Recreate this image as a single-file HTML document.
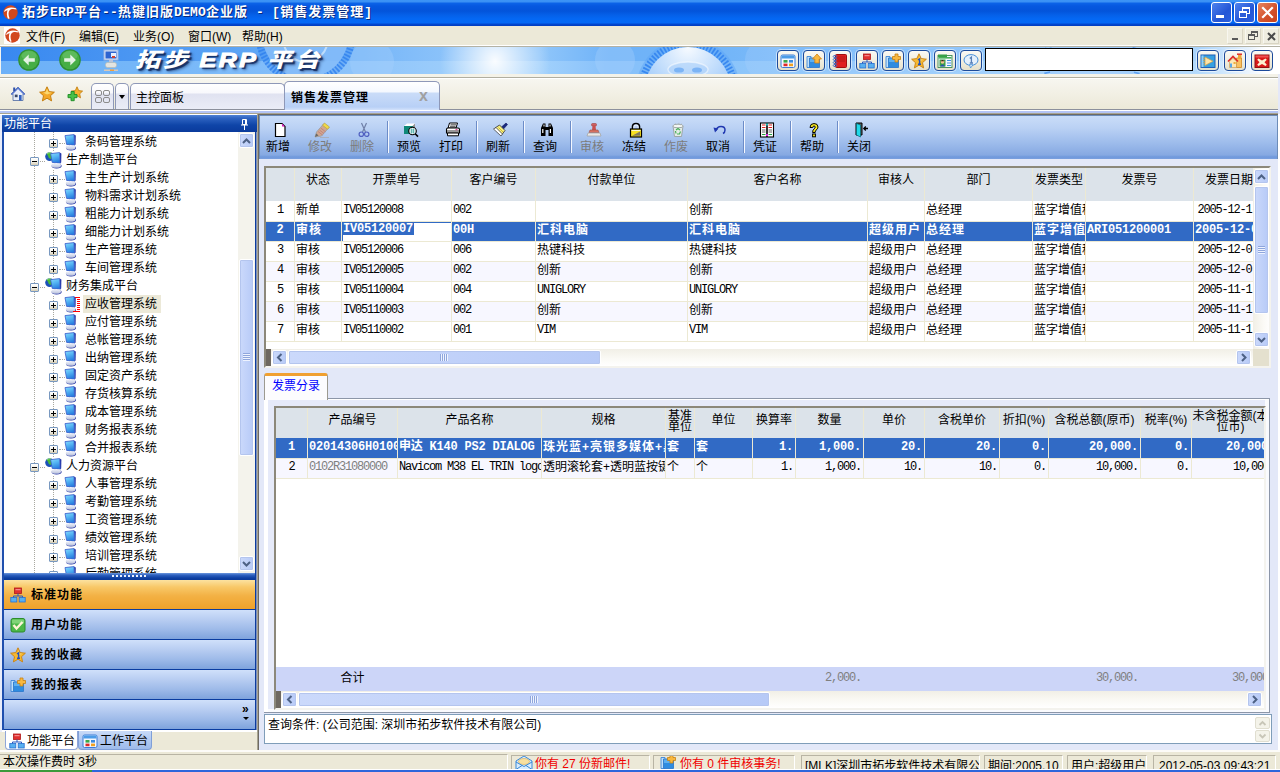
<!DOCTYPE html>
<html lang="zh-CN"><head><meta charset="utf-8"><title>拓步ERP平台</title>
<style>
*{box-sizing:border-box;margin:0;padding:0}
html,body{width:1280px;height:772px;overflow:hidden;background:#ECE9D8;font-family:"Liberation Sans","Noto Sans CJK SC",sans-serif;font-size:12px;color:#000}
.a{position:absolute}
.m{font-family:"Liberation Mono","Noto Sans CJK SC",monospace;font-size:12px;letter-spacing:-1.2px}
#title{left:0;top:0;width:1280px;height:26px;background:linear-gradient(#3C94F6 0,#3A90F4 2px,#0C64E8 3px,#0658E0 6px,#0354DA 11px,#0560E8 15px,#0468F4 19px,#0469F5 23px,#0248D0 24px,#003CC0 26px)}
#title .t{left:22px;top:3px;color:#fff;font-weight:bold;font-size:13px;line-height:18px;white-space:nowrap;letter-spacing:1px;font-family:"Liberation Sans","Noto Sans CJK SC",sans-serif;text-shadow:1px 1px 0 #0A2A7A}
.tb{top:2px;width:21px;height:21px;border:1px solid #fff;border-radius:3px;background:linear-gradient(135deg,#4E82EE,#2456D6 60%,#2A5FDD)}
.tb.x{background:linear-gradient(135deg,#E8845E,#D2502A 60%,#C9421C)}
#title .t span{font-family:"Liberation Mono",monospace;letter-spacing:.2px;white-space:pre}
#menu{left:0;top:26px;width:1280px;height:21px;background:linear-gradient(#ECE9D8 0,#ECE9D8 19px,#fff 19px,#fff 20px,#B4B2A4 20px)}
#menu span{position:absolute;top:3px;line-height:16px;white-space:nowrap}
.mb{top:28px;width:16px;height:16px;border:1px solid #F8F7F0;border-right-color:#D8D4C4;border-bottom-color:#D8D4C4;background:#EFEDE0}
#tabs{left:0;top:74px;width:1278px;height:41px;background:linear-gradient(#F4F2E8 0,#F4F2E8 3px,#B0AEA0 3px,#B0AEA0 4px,#fff 4px,#fff 5px,#F7F6F0 5px,#ECE9D8 35px,#8C909C 35px,#8C909C 36px,#fff 36px,#fff 37px,#B4C4F4 37px,#B4C4F4 39px,#A8A490 39px,#A8A490 40px,#fff 40px)}
#redge{left:1278px;top:74px;width:2px;height:678px;background:linear-gradient(#E4E8F8 0,#E4E8F8 40px,#fff 40px)}

.tbtn{position:absolute;top:3px;width:22px;height:21px;border:1px solid #1C4A9A;border-radius:4px;background:linear-gradient(#FAF9F4,#ECE9D8 70%,#E4E0CC);box-shadow:0 0 0 1px rgba(255,255,255,.55)}
.tbtn svg{position:absolute;left:2px;top:2px}
.tab{position:absolute;border:1px solid #8E98B8;border-bottom:0;border-radius:5px 5px 0 0;white-space:nowrap}

#banner{left:0;top:47px;width:1280px;height:27px;overflow:hidden;background:
 radial-gradient(ellipse 55px 60px at 495px 14px,rgba(255,255,255,.95),rgba(255,255,255,0) 100%),
 radial-gradient(circle 44px at 1090px 36px,rgba(255,255,255,.3) 0,rgba(255,255,255,.15) 70%,rgba(255,255,255,0) 100%),
 linear-gradient(90deg,#3888F0 0,#4A96F2 130px,#66ACF6 300px,#8CC3FA 450px,#90C6FA 540px,#6EB2F8 610px,#72B5F8 720px,#86C0FA 850px,#9CCCFB 1100px,#AAD4FC 1200px,#E8F3FE 1250px,#fff 1266px) 0 0/1280px 14px no-repeat,
 linear-gradient(90deg,#6CB0F8 0,#74B6F8 130px,#84BEFA 300px,#9CCDFB 450px,#A2D1FC 540px,#86C0FA 610px,#8AC4FA 720px,#98CAFB 850px,#A8D4FC 1100px,#B4DAFC 1200px,#ECF5FE 1250px,#fff 1266px) 0 14px/1280px 13px no-repeat}
#logo{left:135px;top:-2px;font-size:25px;line-height:30px;font-weight:900;font-style:italic;color:#fff;white-space:nowrap;letter-spacing:2.5px;text-shadow:2px 2px 1px rgba(10,30,80,.8),3px 3px 3px rgba(10,30,80,.45);transform:scaleY(.82);transform-origin:0 50%}
#srch{left:985px;top:1px;width:208px;height:23px;background:#fff;border:1px solid #000}

#tabs svg.i{position:absolute;top:12px}

#lp{left:0;top:115px;width:257px;height:636px;background:linear-gradient(#fff 0,#fff 617px,#ECE9D8 617px)}
#lp .edgeL{left:0;top:0;width:2px;height:617px;background:#E8ECFA}
#lp .bl{left:2px;top:0;width:2px;height:615px;background:#1F4FAE}
#lp .br{left:255px;top:0;width:2px;height:615px;background:linear-gradient(90deg,#0C3C9E 0,#0C3C9E 1px,#7E90BC 1px)}
#lph{left:2px;top:0;width:255px;height:17px;background:linear-gradient(#4F82D6 0,#2F64C2 3px,#0F45A8 10px,#0A3A9C 17px);color:#fff;line-height:19px;padding-left:2px;overflow:hidden}
#tree{left:4px;top:17px;width:234px;height:441px;background:#fff;overflow:hidden}
.tr{position:absolute;left:0;width:234px;height:18px;line-height:18px;white-space:nowrap}
.tr .x{position:absolute;top:6px;width:9px;height:9px;border:1px solid #7898C0;border-radius:1px;background:linear-gradient(#fff 0,#F4F2EA 50%,#D4CCB4)}
.tr .x:before{content:"";position:absolute;left:1px;top:3px;width:5px;height:1px;background:#000}
.tr .x.p:after{content:"";position:absolute;left:3px;top:1px;width:1px;height:5px;background:#000}
.tr .h{position:absolute;top:10px;height:1px;border-top:1px dotted #A8A8A0}
.tr .tx{position:absolute;top:0}
.vl{position:absolute;width:1px;border-left:1px dotted #A8A8A0}
#tsb{left:238px;top:17px;width:17px;height:441px;background:#F4F3EC}
.sbb{position:absolute;width:15px;height:15px;border:1px solid #fff;border-radius:2px;background:linear-gradient(90deg,#CBD9FB,#B7CAF7);box-shadow:0 0 0 1px #B4C5EE inset}
.sbt{position:absolute;border:1px solid #fff;border-radius:2px;background:linear-gradient(90deg,#CBD9FB,#B7CAF7);box-shadow:0 0 0 1px #B4C5EE inset}
#lsp{left:4px;top:458px;width:251px;height:7px;background:linear-gradient(#6D98DE 0,#2F62C0 2px,#0D3FA2 5px,#0A3898 7px)}
.ob{position:absolute;left:4px;width:251px;height:29px;background:linear-gradient(#D0E0FA 0,#BCD0F3 8px,#9CB9E8 20px,#7FA3DC 29px);border-bottom:0}
.ob.on{background:linear-gradient(#FCE2A0 0,#F8C868 7px,#F3B144 16px,#EEA12A 29px)}
.obl{position:absolute;left:4px;width:251px;height:1px;background:#0A3CA0}
.ob b{position:absolute;left:27px;top:7px;line-height:16px;letter-spacing:1px;font-size:12px}
.btab{position:absolute;top:616px;height:19px;line-height:20px;white-space:nowrap}

#spl{left:257px;top:114px;width:2px;height:637px;background:linear-gradient(90deg,#A8A490 0,#A8A490 1px,#6E6A64 1px)}
#rpt{left:258px;top:114px;width:1020px;height:1px;background:#6E6A64}
#rp{left:259px;top:115px;width:1019px;height:636px;background:#E3E8F8}
#rp>*{margin-top:1px}
#tbar{left:0;top:-1px;width:1019px;height:44px;border:1px solid #6C8CB8;border-bottom:0;background:linear-gradient(#CADDF8 0,#BAD1F4 12px,#9FBDEC 26px,#86A9E2 39px,#6F98DC 41px,#7AA0DE 43px);border-bottom:0}
.tbn{position:absolute;top:24px;width:42px;text-align:center;line-height:14px;white-space:nowrap}
.tbn.d{color:#7C7C7C}
.tsep{position:absolute;top:5px;width:2px;height:32px;border-left:1px solid #6C8CC8;border-right:1px solid #F4F8FF}
.ico{position:absolute;top:6px}
.g{position:absolute;background:#fff;border:2px solid #8C887A;border-right-color:#F4F3EE;border-bottom-color:#F4F3EE;overflow:hidden}
.gh{position:absolute;left:0;top:0;background:#DCE3EA}
.c{position:absolute;white-space:nowrap;overflow:hidden;line-height:19px;height:19px}
.vln{position:absolute;width:1px;background:#ECE9D3}
.hln{position:absolute;height:1px;background:#ECE9D3}
.sel{position:absolute;background:#316AC5}
.w{color:#fff;font-weight:bold;letter-spacing:1px}
.m.w{letter-spacing:-0.2px}
.hsb{position:absolute;height:17px;background:linear-gradient(#F1EFE6,#FBFAF6 60%,#fff)}
.vsb{position:absolute;width:18px;background:linear-gradient(90deg,#F1EFE6,#FBFAF6 60%,#fff)}

#pg{left:5px;top:282px;width:1006px;height:315px;background:#E6EAF9;border:1px solid #8C96A8;border-left:0;box-shadow:inset 4px 0 0 #fff,inset 0 1px 0 #fff,inset -4px 0 0 #FAFBFE,inset 0 -3px 0 #FAFBFE}
#tb1{left:5px;top:257px;width:64px;height:27px;background:#FCFCFE;border:1px solid #9C9A90;border-bottom:0;border-top:3px solid #F0A030;border-radius:3px 3px 0 0;color:#0000FF;line-height:20px;padding-left:7px}

#qb{left:5px;top:598px;width:1008px;height:30px;background:#fff;border:1px solid #7F9DB9;line-height:14px;padding:3px 0 0 3px;white-space:nowrap}
.qs{position:absolute;left:990px;width:15px;height:12px;border:1px solid #E0DED0;border-radius:2px;background:#F4F3EA}

#sb{left:0;top:750px;width:1280px;height:22px;background:#ECE9D8;border-top:2px solid #FCFBF8}
.sp{position:absolute;top:3px;height:15px;border:1px solid #B8B4A4;border-right-color:#fff;border-bottom-color:#fff;line-height:17px;white-space:nowrap;overflow:hidden}
.sp.r{color:#F00000}
#task{left:0;top:769px;width:1280px;height:3px;background:#2E66DC;border-top:1px solid #fff}
</style></head>
<body>
<svg width="0" height="0" style="position:absolute"><defs><linearGradient id="scr" x1="0" y1="0" x2="0.3" y2="1"><stop offset="0" stop-color="#8ADCFC"/><stop offset=".45" stop-color="#58B8F4"/><stop offset="1" stop-color="#2A80E0"/></linearGradient><linearGradient id="bs" x1="0" y1="0" x2="0" y2="1"><stop offset="0" stop-color="#F4F6FC"/><stop offset="1" stop-color="#B8C0DC"/></linearGradient></defs></svg>
<div id="title" class="a"><svg class="a" style="left:3px;top:5px" width="15" height="15" viewBox="0 0 15 15"><circle cx="7.5" cy="7.5" r="7.2" fill="#D2481E"/><path d="M1.2 6 C3 2.5 8 1.5 13 3.2 L13.6 4.6 C10.5 3.6 8 3.8 6.6 5.2 C5.2 7 5.2 10 6.6 13.6 L5 13.8 C3.6 10.5 3.6 7.5 4.6 5.2 C3.5 5.4 2.2 6 1.4 7 Z" fill="#fff"/></svg><div class="a t">拓步<span>ERP</span>平台<span>--</span>热键旧版<span>DEMO</span>企业版<span> - [</span>销售发票管理<span>]</span></div><div class="a tb" style="left:1211px"><i class="a" style="left:4px;top:12px;width:8px;height:3px;background:#fff"></i></div><div class="a tb" style="left:1234px"><i class="a" style="left:7px;top:4px;width:8px;height:7px;border:1px solid #fff;border-top-width:2px"></i><i class="a" style="left:4px;top:8px;width:8px;height:7px;border:1px solid #fff;border-top-width:2px;background:#2C5CD8"></i></div><div class="a tb x" style="left:1257px"><svg class="a" style="left:3px;top:3px" width="13" height="13" viewBox="0 0 13 13"><path d="M2 2 L11 11 M11 2 L2 11" stroke="#fff" stroke-width="2.2" stroke-linecap="square"/></svg></div></div>
<div id="menu" class="a"><i class="a" style="left:4px;top:1px;width:16px;height:17px;background:#fff"></i><svg class="a" style="left:5px;top:2px" width="15" height="15" viewBox="0 0 15 15"><circle cx="7.5" cy="7.5" r="7.2" fill="#D2481E"/><path d="M1.2 6 C3 2.5 8 1.5 13 3.2 L13.6 4.6 C10.5 3.6 8 3.8 6.6 5.2 C5.2 7 5.2 10 6.6 13.6 L5 13.8 C3.6 10.5 3.6 7.5 4.6 5.2 C3.5 5.4 2.2 6 1.4 7 Z" fill="#fff"/></svg><span style="left:26px">文件(F)</span><span style="left:79px">编辑(E)</span><span style="left:133px">业务(O)</span><span style="left:188px">窗口(W)</span><span style="left:242px">帮助(H)</span></div><div class="a mb" style="left:1227px"><i class="a" style="left:4px;top:9px;width:6px;height:2px;background:#5A5A5A"></i></div><div class="a mb" style="left:1245px"><i class="a" style="left:5px;top:2px;width:7px;height:6px;border:1px solid #5A5A5A;border-top-width:2px"></i><i class="a" style="left:2px;top:5px;width:7px;height:6px;border:1px solid #5A5A5A;border-top-width:2px;background:#EFEDE0"></i></div><div class="a mb" style="left:1263px"><svg class="a" style="left:3px;top:3px" width="9" height="9" viewBox="0 0 9 9"><path d="M1 1 L8 8 M8 1 L1 8" stroke="#4A4A4A" stroke-width="2"/></svg></div>
<div id="banner" class="a"><i class="a" style="left:0;top:0;width:1px;height:27px;background:#F4F4F0"></i><svg class="a" style="left:0;top:0" width="1280" height="27" viewBox="0 47 1280 27"><defs><radialGradient id="dg" cx="50%" cy="0%" r="70%"><stop offset="0" stop-color="#fff" stop-opacity=".95"/><stop offset="1" stop-color="#9CC8FA" stop-opacity=".9"/></radialGradient></defs><circle cx="688" cy="90" r="52" fill="#5AA4F6" opacity=".45"/><circle cx="688" cy="90" r="46.5" fill="none" stroke="#2E80EE" stroke-width="7" stroke-dasharray="1.7 1.7" opacity=".85"/><circle cx="688" cy="90" r="43" fill="url(#dg)"/><ellipse cx="688" cy="69.5" rx="20" ry="7.5" fill="#A8CEFA" fill-opacity=".6" stroke="#fff" stroke-opacity=".5" stroke-width="1.5"/><ellipse cx="679" cy="70" rx="5" ry="2.6" fill="#4C98F0" opacity=".55"/><ellipse cx="697" cy="70" rx="5" ry="2.6" fill="#4C98F0" opacity=".55"/><circle cx="305.5" cy="35" r="50" fill="#3C8CF0" opacity=".35"/><circle cx="305.5" cy="35" r="46.5" fill="none" stroke="#2E80EE" stroke-width="7" stroke-dasharray="1.7 1.7" opacity=".8"/><circle cx="305.5" cy="35" r="43" fill="#8EC2FA" opacity=".75"/><circle cx="305.5" cy="40" r="22" fill="none" stroke="#D8ECFE" stroke-width="2" opacity=".7"/><circle cx="372" cy="62" r="22" fill="#A8D2FC" opacity=".35"/><circle cx="615" cy="60" r="20" fill="#A8D2FC" opacity=".35"/><circle cx="765" cy="60" r="20" fill="#A8D2FC" opacity=".3"/><circle cx="1092" cy="62" r="46" fill="none" stroke="#2E80EE" stroke-width="6" stroke-dasharray="1.7 1.7" opacity=".6"/><circle cx="1092" cy="62" r="43" fill="#9CCAFB" opacity=".7"/></svg><svg class="a" style="left:18px;top:2px" width="22" height="22" viewBox="0 0 21.6 21.6"><circle cx="10.8" cy="10.8" r="10.6" fill="#2F8F32"/><circle cx="10.8" cy="10.6" r="9.4" fill="#46AE46"/><ellipse cx="10.8" cy="6.5" rx="7.5" ry="4.5" fill="#6CC26A" opacity=".6"/><path d="M5 10.8 L10.5 5.3 L10.5 9 L16.5 9 L16.5 12.6 L10.5 12.6 L10.5 16.3 Z" fill="#E4F2E4"/></svg><svg class="a" style="left:59px;top:2px" width="22" height="22" viewBox="0 0 21.6 21.6"><circle cx="10.8" cy="10.8" r="10.6" fill="#2F8F32"/><circle cx="10.8" cy="10.6" r="9.4" fill="#46AE46"/><ellipse cx="10.8" cy="6.5" rx="7.5" ry="4.5" fill="#6CC26A" opacity=".6"/><path d="M5 10.8 L10.5 5.3 L10.5 9 L16.5 9 L16.5 12.6 L10.5 12.6 L10.5 16.3 Z" fill="#E4F2E4" transform="translate(21.6,0) scale(-1,1)"/></svg><svg class="a" style="left:103px;top:2px" width="16" height="23" viewBox="0 0 16 23"><rect x="1" y="1" width="14" height="10" fill="#DCE6F8" stroke="#9AB4E0"/><rect x="2.5" y="2.5" width="11" height="7" fill="#2E64D0"/><rect x="8" y="4" width="5" height="4" fill="#E8F0FF"/><rect x="9" y="7" width="3" height="2" fill="#D04030"/><rect x="6" y="11" width="4" height="2" fill="#B8C4DC"/><rect x="2.5" y="13.5" width="11" height="5" rx="2" fill="#E4E4E0" stroke="#B8B8B0" stroke-width=".6"/><rect x="1" y="20.5" width="14" height="1.5" fill="#D8C8B8"/><rect x="7" y="20.5" width="4" height="1.5" fill="#F0A040"/></svg><div id="logo" class="a">拓步 <span style="-webkit-text-stroke:1.3px #fff">ERP</span> 平台</div><div class="tbtn" style="left:777px"><svg width="16" height="16" viewBox="0 0 16 16"><rect x="1" y="2" width="14" height="12.5" rx="1.5" fill="#F4F8FF" stroke="#3C7CD8"/><rect x="1.5" y="2.5" width="13" height="3" fill="#4C9CE8"/><rect x="3.5" y="7" width="4" height="2.6" fill="#3CA848"/><rect x="9" y="7" width="4" height="2.6" fill="#3C8CE0"/><rect x="3.5" y="10.6" width="4" height="2.6" fill="#E02828"/><rect x="9" y="10.6" width="4" height="2.6" fill="#F0A020"/></svg></div><div class="tbtn" style="left:803px"><svg width="16" height="16" viewBox="0 0 16 16"><path d="M1 3.5 H5 V14.5 H1Z" fill="#BFE0FA" stroke="#3C86D8" stroke-width=".9"/><path d="M3.5 5 H13.5 V14.5 H3.5Z" fill="#5CB0F0" stroke="#2C78CC" stroke-width=".9"/><path d="M4 9 H13 V14 H4Z" fill="#2E8CE0"/><path d="M11 1 L15.5 6 H13.2 V10 H8.8 V6 H6.5Z" fill="#F8B840" stroke="#D08010" stroke-width=".8"/></svg></div><div class="tbtn" style="left:829px"><svg width="16" height="16" viewBox="0 0 16 16"><rect x="3.5" y="1.5" width="11" height="13" rx="1" fill="#E02020" stroke="#A01010"/><path d="M6 3 V9 M8 3 V9 M10 3 V9 M12 3 V9" stroke="#A81818" stroke-width=".8"/><g fill="none" stroke="#4068C0" stroke-width="1"><ellipse cx="3" cy="3.5" rx="1.8" ry="1"/><ellipse cx="3" cy="6.5" rx="1.8" ry="1"/><ellipse cx="3" cy="9.5" rx="1.8" ry="1"/><ellipse cx="3" cy="12.5" rx="1.8" ry="1"/></g></svg></div><div class="tbtn" style="left:856px"><svg width="16" height="16" viewBox="0 0 16 16"><rect x="4.5" y="1" width="7" height="5.5" fill="#E03030" stroke="#B01818" stroke-width=".8"/><rect x="5.5" y="2.2" width="5" height="1" fill="#F8A0A0"/><path d="M8 6.5 V9 M3.5 11 V9 H12.5 V11" stroke="#2858C0" fill="none" stroke-width="1"/><rect x="0.8" y="10.5" width="6" height="4.5" fill="#58B0F0" stroke="#2870D0" stroke-width=".8"/><rect x="9.2" y="10.5" width="6" height="4.5" fill="#58B0F0" stroke="#2870D0" stroke-width=".8"/></svg></div><div class="tbtn" style="left:882px"><svg width="16" height="16" viewBox="0 0 16 16"><path d="M1 3.5 H5 V14.5 H1Z" fill="#BFE0FA" stroke="#3C86D8" stroke-width=".9"/><path d="M3.5 5 H13.5 V14.5 H3.5Z" fill="#5CB0F0" stroke="#2C78CC" stroke-width=".9"/><path d="M4 9 H13 V14 H4Z" fill="#2E8CE0"/><path d="M10 1 H13 V3.5 H15.5 V6.5 H13 V9 H10 V6.5 H7.5 V3.5 H10Z" fill="#F8B840" stroke="#C88010" stroke-width=".8"/></svg></div><div class="tbtn" style="left:908px"><svg width="16" height="16" viewBox="0 0 16 16"><path d="M8 0.8 L10.2 5.6 L15.4 6.2 L11.5 9.7 L12.6 14.9 L8 12.2 L3.4 14.9 L4.5 9.7 L0.6 6.2 L5.8 5.6Z" fill="#F6B830" stroke="#C88010" stroke-width=".9"/><path d="M8 3 L9.4 6.4 L12.8 6.8 L8 8Z" fill="#FCE080"/><path d="M7 7 L8.6 5.8 V11 M7 11.2 H10" stroke="#2050C0" stroke-width="1.4" fill="none"/></svg></div><div class="tbtn" style="left:934px"><svg width="16" height="16" viewBox="0 0 16 16"><rect x="1" y="2.5" width="14" height="12" fill="#F4F8FF" stroke="#3C8C50" stroke-width=".9"/><rect x="1" y="1.5" width="9" height="2.5" fill="#38A048"/><rect x="1.5" y="4" width="13" height="1.6" fill="#48B058"/><rect x="2.5" y="6.5" width="6" height="7" fill="#38A048"/><circle cx="5.5" cy="8.8" r="1.9" fill="#F0C090"/><path d="M3 13.5 Q5.5 9.5 8 13.5Z" fill="#2850B0"/><path d="M3.6 8.2 Q5.5 5.6 7.4 8.2Z" fill="#302010"/><path d="M10 7.5 H14 M10 10 H14 M10 12.5 H14" stroke="#4090E0" stroke-width="1.2"/></svg></div><div class="tbtn" style="left:960px"><svg width="16" height="16" viewBox="0 0 16 16"><ellipse cx="8" cy="7" rx="7" ry="5.4" fill="#E4F0FC" stroke="#4890D8" stroke-width="1"/><path d="M6.5 11.5 L7.5 15 L10 11.8Z" fill="#E4F0FC" stroke="#4890D8" stroke-width=".8"/><path d="M6.8 5.6 L8.4 4.2 V10 M6.8 10 H10" stroke="#5880B8" stroke-width="1.3" fill="none"/></svg></div><div class="tbtn" style="left:1197px"><svg width="16" height="16" viewBox="0 0 16 16"><rect x="1" y="2" width="14" height="12.5" fill="#38A0E0" stroke="#2060B8" stroke-width="1"/><rect x="1.5" y="2.5" width="2" height="11.5" fill="#90D0F8"/><path d="M5 4 L13 8.2 L5 12.5Z" fill="#FCE4A8" stroke="#D8A040" stroke-width=".7"/><path d="M4 5 V11.5" stroke="#D8A040" stroke-width="1.2" stroke-dasharray="1 1"/></svg></div><div class="tbtn" style="left:1224px"><svg width="16" height="16" viewBox="0 0 16 16"><path d="M9.5 5 H14.5 V14.5 H9.5Z" fill="#F8C060" stroke="#D08820" stroke-width=".8"/><path d="M11 2 H14.5 V5 H11Z" fill="#F0A838"/><path d="M10 1.2 H15" stroke="#E02020" stroke-width="1.4"/><path d="M1 8.5 L6 3.5 L11 8.5" fill="none" stroke="#E02828" stroke-width="1.6"/><path d="M2.5 8.5 L6 5.2 L9.5 8.5 V14.5 H2.5Z" fill="#FCE8B8" stroke="#C89040" stroke-width=".6"/><rect x="3" y="10.5" width="2" height="4" fill="#58A8E8"/><rect x="6.5" y="9" width="2.2" height="2" fill="#F0B040"/></svg></div><div class="tbtn" style="left:1251px"><svg width="16" height="16" viewBox="0 0 16 16"><rect x="1" y="2" width="14" height="12.5" fill="#D81818" stroke="#901010" stroke-width="1"/><rect x="1.5" y="2.5" width="13" height="2" fill="#F05050"/><path d="M4.5 5.5 L8 7.5 L11.5 5.5 L12.8 6.8 L10.5 9.2 L12.8 11.8 L11.5 13 L8 11 L4.5 13 L3.2 11.8 L5.5 9.2 L3.2 6.8Z" fill="#FCF0D0"/></svg></div><div id="srch" class="a"></div></div>
<div id="redge" class="a"></div><div id="tabs" class="a"><svg class="i" style="left:10px" width="16" height="16" viewBox="0 0 16 16"><path d="M8 1 L15 8 H13 V14.5 H3 V8 H1Z" fill="#E8EEF8" stroke="#6078A8" stroke-width=".9"/><path d="M8 1 L15.2 8.2 L14 9 L8 3 L2 9 L0.8 8.2Z" fill="#5878D0"/><rect x="3.2" y="1.5" width="2" height="3.5" fill="#3050A8"/><rect x="9" y="9" width="2.6" height="5.5" fill="#3060C0"/><rect x="4.8" y="8.6" width="2.8" height="2.6" fill="#384868"/></svg><svg class="i" style="left:39px" width="16" height="16" viewBox="0 0 16 16"><path d="M8 0.8 L10.2 5.6 L15.4 6.2 L11.5 9.7 L12.6 14.9 L8 12.2 L3.4 14.9 L4.5 9.7 L0.6 6.2 L5.8 5.6Z" fill="#F4A828" stroke="#C07808" stroke-width=".9"/><path d="M8 2.8 L9.5 6.3 L13 6.8 L8 8.4 L4 6.6 L6.6 6.2Z" fill="#FCD870"/></svg><svg class="i" style="left:67px" width="16" height="16" viewBox="0 0 16 16"><path d="M10 0.8 L11.7 4.6 L15.6 5.1 L12.7 7.8 L13.5 11.8 L10 9.8 L6.5 11.8 L7.3 7.8 L4.4 5.1 L8.3 4.6Z" fill="#F4B030" stroke="#C07808" stroke-width=".8"/><path d="M4 5.5 H7.2 V8.5 H10 V11.7 H7.2 V14.7 H4 V11.7 H1 V8.5 H4Z" fill="#48C048" stroke="#1C8C24" stroke-width=".9"/></svg><div class="tab" style="left:91px;top:9px;width:23px;height:26px;background:linear-gradient(#fff 0,#F8F8FC 9px,#E0E2F0 10px,#ECEEF8 27px)"><i class="a" style="left:3px;top:6px;width:7px;height:6px;border:1px solid #8C8C8C;border-radius:2px"></i><i class="a" style="left:11px;top:6px;width:7px;height:6px;border:1px solid #8C8C8C;border-radius:2px"></i><i class="a" style="left:3px;top:13px;width:7px;height:6px;border:1px solid #8C8C8C;border-radius:2px"></i><i class="a" style="left:11px;top:13px;width:7px;height:6px;border:1px solid #8C8C8C;border-radius:2px"></i></div><div class="tab" style="left:115px;top:9px;width:14px;height:26px;background:linear-gradient(#fff 0,#F8F8FC 9px,#E0E2F0 10px,#ECEEF8 27px)"><i class="a" style="left:3px;top:11px;width:0;height:0;border:3px solid transparent;border-top:4px solid #000;border-bottom:0"></i></div><div class="tab" style="left:130px;top:9px;width:155px;height:26px;background:linear-gradient(#fff 0,#F8F8FC 9px,#E0E2F0 10px,#ECEEF8 27px);padding-left:5px;line-height:29px">主控面板</div><div class="tab" style="left:284px;top:7px;width:156px;height:29px;background:linear-gradient(#fff 0,#F4F8FE 10px,#CADCF8 11px,#B8D0F6 25px,#DCE8FC 29px);padding-left:6px;line-height:33px;font-weight:bold;letter-spacing:1px">销售发票管理<span class="a" style="left:134px;top:-3px;color:#A0A0A0;font-size:16px;letter-spacing:0">x</span></div></div>
<div id="lp" class="a"><i class="a edgeL"></i><i class="a bl"></i><i class="a br"></i><div id="lph" class="a">功能平台<svg class="a" style="left:239px;top:4px" width="7" height="11" viewBox="0 0 7 11"><path d="M1.5 0.5 H5.5 V5.5 H1.5Z M4.5 0.5 V5.5 M0 6 H7 M3.5 6 V11" fill="none" stroke="#fff" stroke-width="1"/></svg></div><div id="tree" class="a"><i class="vl" style="left:30px;top:0;height:441px"></i><i class="vl" style="left:49px;top:0;height:441px"></i><div class="tr" style="top:1px"><i class="h" style="left:55px;width:6px"></i><i class="x p" style="left:45px"></i><svg class="a" style="left:60px;top:1px" width="13" height="17" viewBox="0 0 13 17"><path d="M10 0.6 L11.8 1.6 L11.6 10.4 L10.4 11.4Z" fill="#2434A4"/><path d="M1 1.6 L10 0.6 L10.5 11.2 L2.6 10.4Z" fill="url(#scr)" stroke="#3A5CCC" stroke-width=".8"/><path d="M5 11 L9 11.4 L9 12.5 L5 12.5Z" fill="#3848B0"/><ellipse cx="7" cy="14.1" rx="5" ry="2.4" fill="#2434A4"/><ellipse cx="6.6" cy="13.4" rx="4.8" ry="2.3" fill="url(#bs)"/></svg><span class="tx" style="left:81px">条码管理系统</span></div><div class="tr" style="top:19px"><i class="h" style="left:36px;width:5px"></i><i class="x " style="left:26px"></i><i class="a" style="left:49px;top:0;width:1px;height:18px;background:#fff"></i><svg class="a" style="left:41px;top:0px" width="17" height="18" viewBox="0 0 17 18"><circle cx="4.6" cy="5.6" r="4.4" fill="#1C50B8"/><path d="M1.5 3 Q4 0.5 7 2 Q6 5 8 8 Q5 8.5 3.5 6.5 Q3.5 4.5 1.5 3Z" fill="#48B838"/><path d="M2 2.6 Q4 1.2 6 1.8" stroke="#A0E880" stroke-width=".8" fill="none"/><g transform="translate(4.6,1)"><path d="M10 0.6 L11.8 1.6 L11.6 10.4 L10.4 11.4Z" fill="#2434A4"/><path d="M1 1.6 L10 0.6 L10.5 11.2 L2.6 10.4Z" fill="url(#scr)" stroke="#3A5CCC" stroke-width=".8"/><path d="M5 11 L9 11.4 L9 12.5 L5 12.5Z" fill="#3848B0"/><ellipse cx="7" cy="14.1" rx="5" ry="2.4" fill="#2434A4"/><ellipse cx="6.6" cy="13.4" rx="4.8" ry="2.3" fill="url(#bs)"/></g></svg><span class="tx" style="left:62px">生产制造平台</span></div><div class="tr" style="top:37px"><i class="h" style="left:55px;width:6px"></i><i class="x p" style="left:45px"></i><svg class="a" style="left:60px;top:1px" width="13" height="17" viewBox="0 0 13 17"><path d="M10 0.6 L11.8 1.6 L11.6 10.4 L10.4 11.4Z" fill="#2434A4"/><path d="M1 1.6 L10 0.6 L10.5 11.2 L2.6 10.4Z" fill="url(#scr)" stroke="#3A5CCC" stroke-width=".8"/><path d="M5 11 L9 11.4 L9 12.5 L5 12.5Z" fill="#3848B0"/><ellipse cx="7" cy="14.1" rx="5" ry="2.4" fill="#2434A4"/><ellipse cx="6.6" cy="13.4" rx="4.8" ry="2.3" fill="url(#bs)"/></svg><span class="tx" style="left:81px">主生产计划系统</span></div><div class="tr" style="top:55px"><i class="h" style="left:55px;width:6px"></i><i class="x p" style="left:45px"></i><svg class="a" style="left:60px;top:1px" width="13" height="17" viewBox="0 0 13 17"><path d="M10 0.6 L11.8 1.6 L11.6 10.4 L10.4 11.4Z" fill="#2434A4"/><path d="M1 1.6 L10 0.6 L10.5 11.2 L2.6 10.4Z" fill="url(#scr)" stroke="#3A5CCC" stroke-width=".8"/><path d="M5 11 L9 11.4 L9 12.5 L5 12.5Z" fill="#3848B0"/><ellipse cx="7" cy="14.1" rx="5" ry="2.4" fill="#2434A4"/><ellipse cx="6.6" cy="13.4" rx="4.8" ry="2.3" fill="url(#bs)"/></svg><span class="tx" style="left:81px">物料需求计划系统</span></div><div class="tr" style="top:73px"><i class="h" style="left:55px;width:6px"></i><i class="x p" style="left:45px"></i><svg class="a" style="left:60px;top:1px" width="13" height="17" viewBox="0 0 13 17"><path d="M10 0.6 L11.8 1.6 L11.6 10.4 L10.4 11.4Z" fill="#2434A4"/><path d="M1 1.6 L10 0.6 L10.5 11.2 L2.6 10.4Z" fill="url(#scr)" stroke="#3A5CCC" stroke-width=".8"/><path d="M5 11 L9 11.4 L9 12.5 L5 12.5Z" fill="#3848B0"/><ellipse cx="7" cy="14.1" rx="5" ry="2.4" fill="#2434A4"/><ellipse cx="6.6" cy="13.4" rx="4.8" ry="2.3" fill="url(#bs)"/></svg><span class="tx" style="left:81px">粗能力计划系统</span></div><div class="tr" style="top:91px"><i class="h" style="left:55px;width:6px"></i><i class="x p" style="left:45px"></i><svg class="a" style="left:60px;top:1px" width="13" height="17" viewBox="0 0 13 17"><path d="M10 0.6 L11.8 1.6 L11.6 10.4 L10.4 11.4Z" fill="#2434A4"/><path d="M1 1.6 L10 0.6 L10.5 11.2 L2.6 10.4Z" fill="url(#scr)" stroke="#3A5CCC" stroke-width=".8"/><path d="M5 11 L9 11.4 L9 12.5 L5 12.5Z" fill="#3848B0"/><ellipse cx="7" cy="14.1" rx="5" ry="2.4" fill="#2434A4"/><ellipse cx="6.6" cy="13.4" rx="4.8" ry="2.3" fill="url(#bs)"/></svg><span class="tx" style="left:81px">细能力计划系统</span></div><div class="tr" style="top:109px"><i class="h" style="left:55px;width:6px"></i><i class="x p" style="left:45px"></i><svg class="a" style="left:60px;top:1px" width="13" height="17" viewBox="0 0 13 17"><path d="M10 0.6 L11.8 1.6 L11.6 10.4 L10.4 11.4Z" fill="#2434A4"/><path d="M1 1.6 L10 0.6 L10.5 11.2 L2.6 10.4Z" fill="url(#scr)" stroke="#3A5CCC" stroke-width=".8"/><path d="M5 11 L9 11.4 L9 12.5 L5 12.5Z" fill="#3848B0"/><ellipse cx="7" cy="14.1" rx="5" ry="2.4" fill="#2434A4"/><ellipse cx="6.6" cy="13.4" rx="4.8" ry="2.3" fill="url(#bs)"/></svg><span class="tx" style="left:81px">生产管理系统</span></div><div class="tr" style="top:127px"><i class="h" style="left:55px;width:6px"></i><i class="x p" style="left:45px"></i><svg class="a" style="left:60px;top:1px" width="13" height="17" viewBox="0 0 13 17"><path d="M10 0.6 L11.8 1.6 L11.6 10.4 L10.4 11.4Z" fill="#2434A4"/><path d="M1 1.6 L10 0.6 L10.5 11.2 L2.6 10.4Z" fill="url(#scr)" stroke="#3A5CCC" stroke-width=".8"/><path d="M5 11 L9 11.4 L9 12.5 L5 12.5Z" fill="#3848B0"/><ellipse cx="7" cy="14.1" rx="5" ry="2.4" fill="#2434A4"/><ellipse cx="6.6" cy="13.4" rx="4.8" ry="2.3" fill="url(#bs)"/></svg><span class="tx" style="left:81px">车间管理系统</span></div><div class="tr" style="top:145px"><i class="h" style="left:36px;width:5px"></i><i class="x " style="left:26px"></i><i class="a" style="left:49px;top:0;width:1px;height:18px;background:#fff"></i><svg class="a" style="left:41px;top:0px" width="17" height="18" viewBox="0 0 17 18"><circle cx="4.6" cy="5.6" r="4.4" fill="#1C50B8"/><path d="M1.5 3 Q4 0.5 7 2 Q6 5 8 8 Q5 8.5 3.5 6.5 Q3.5 4.5 1.5 3Z" fill="#48B838"/><path d="M2 2.6 Q4 1.2 6 1.8" stroke="#A0E880" stroke-width=".8" fill="none"/><g transform="translate(4.6,1)"><path d="M10 0.6 L11.8 1.6 L11.6 10.4 L10.4 11.4Z" fill="#2434A4"/><path d="M1 1.6 L10 0.6 L10.5 11.2 L2.6 10.4Z" fill="url(#scr)" stroke="#3A5CCC" stroke-width=".8"/><path d="M5 11 L9 11.4 L9 12.5 L5 12.5Z" fill="#3848B0"/><ellipse cx="7" cy="14.1" rx="5" ry="2.4" fill="#2434A4"/><ellipse cx="6.6" cy="13.4" rx="4.8" ry="2.3" fill="url(#bs)"/></g></svg><span class="tx" style="left:62px">财务集成平台</span></div><div class="tr" style="top:163px"><i class="h" style="left:55px;width:6px"></i><i class="x p" style="left:45px"></i><svg class="a" style="left:60px;top:1px" width="13" height="17" viewBox="0 0 13 17"><path d="M10 0.6 L11.8 1.6 L11.6 10.4 L10.4 11.4Z" fill="#2434A4"/><path d="M1 1.6 L10 0.6 L10.5 11.2 L2.6 10.4Z" fill="url(#scr)" stroke="#3A5CCC" stroke-width=".8"/><path d="M5 11 L9 11.4 L9 12.5 L5 12.5Z" fill="#3848B0"/><ellipse cx="7" cy="14.1" rx="5" ry="2.4" fill="#2434A4"/><ellipse cx="6.6" cy="13.4" rx="4.8" ry="2.3" fill="url(#bs)"/></svg><i class="a" style="left:79px;top:0;width:78px;height:18px;background:#ECE9D8"></i><i class="a" style="left:71px;top:2px;width:5px;height:1px;background:#F00"></i><i class="a" style="left:69px;top:16px;width:7px;height:1px;background:#F00"></i><i class="a" style="left:73px;top:2px;width:3px;height:15px;background:repeating-linear-gradient(#F00 0,#F00 1px,transparent 1px,transparent 2px)"></i><span class="tx" style="left:81px">应收管理系统</span></div><div class="tr" style="top:181px"><i class="h" style="left:55px;width:6px"></i><i class="x p" style="left:45px"></i><svg class="a" style="left:60px;top:1px" width="13" height="17" viewBox="0 0 13 17"><path d="M10 0.6 L11.8 1.6 L11.6 10.4 L10.4 11.4Z" fill="#2434A4"/><path d="M1 1.6 L10 0.6 L10.5 11.2 L2.6 10.4Z" fill="url(#scr)" stroke="#3A5CCC" stroke-width=".8"/><path d="M5 11 L9 11.4 L9 12.5 L5 12.5Z" fill="#3848B0"/><ellipse cx="7" cy="14.1" rx="5" ry="2.4" fill="#2434A4"/><ellipse cx="6.6" cy="13.4" rx="4.8" ry="2.3" fill="url(#bs)"/></svg><span class="tx" style="left:81px">应付管理系统</span></div><div class="tr" style="top:199px"><i class="h" style="left:55px;width:6px"></i><i class="x p" style="left:45px"></i><svg class="a" style="left:60px;top:1px" width="13" height="17" viewBox="0 0 13 17"><path d="M10 0.6 L11.8 1.6 L11.6 10.4 L10.4 11.4Z" fill="#2434A4"/><path d="M1 1.6 L10 0.6 L10.5 11.2 L2.6 10.4Z" fill="url(#scr)" stroke="#3A5CCC" stroke-width=".8"/><path d="M5 11 L9 11.4 L9 12.5 L5 12.5Z" fill="#3848B0"/><ellipse cx="7" cy="14.1" rx="5" ry="2.4" fill="#2434A4"/><ellipse cx="6.6" cy="13.4" rx="4.8" ry="2.3" fill="url(#bs)"/></svg><span class="tx" style="left:81px">总帐管理系统</span></div><div class="tr" style="top:217px"><i class="h" style="left:55px;width:6px"></i><i class="x p" style="left:45px"></i><svg class="a" style="left:60px;top:1px" width="13" height="17" viewBox="0 0 13 17"><path d="M10 0.6 L11.8 1.6 L11.6 10.4 L10.4 11.4Z" fill="#2434A4"/><path d="M1 1.6 L10 0.6 L10.5 11.2 L2.6 10.4Z" fill="url(#scr)" stroke="#3A5CCC" stroke-width=".8"/><path d="M5 11 L9 11.4 L9 12.5 L5 12.5Z" fill="#3848B0"/><ellipse cx="7" cy="14.1" rx="5" ry="2.4" fill="#2434A4"/><ellipse cx="6.6" cy="13.4" rx="4.8" ry="2.3" fill="url(#bs)"/></svg><span class="tx" style="left:81px">出纳管理系统</span></div><div class="tr" style="top:235px"><i class="h" style="left:55px;width:6px"></i><i class="x p" style="left:45px"></i><svg class="a" style="left:60px;top:1px" width="13" height="17" viewBox="0 0 13 17"><path d="M10 0.6 L11.8 1.6 L11.6 10.4 L10.4 11.4Z" fill="#2434A4"/><path d="M1 1.6 L10 0.6 L10.5 11.2 L2.6 10.4Z" fill="url(#scr)" stroke="#3A5CCC" stroke-width=".8"/><path d="M5 11 L9 11.4 L9 12.5 L5 12.5Z" fill="#3848B0"/><ellipse cx="7" cy="14.1" rx="5" ry="2.4" fill="#2434A4"/><ellipse cx="6.6" cy="13.4" rx="4.8" ry="2.3" fill="url(#bs)"/></svg><span class="tx" style="left:81px">固定资产系统</span></div><div class="tr" style="top:253px"><i class="h" style="left:55px;width:6px"></i><i class="x p" style="left:45px"></i><svg class="a" style="left:60px;top:1px" width="13" height="17" viewBox="0 0 13 17"><path d="M10 0.6 L11.8 1.6 L11.6 10.4 L10.4 11.4Z" fill="#2434A4"/><path d="M1 1.6 L10 0.6 L10.5 11.2 L2.6 10.4Z" fill="url(#scr)" stroke="#3A5CCC" stroke-width=".8"/><path d="M5 11 L9 11.4 L9 12.5 L5 12.5Z" fill="#3848B0"/><ellipse cx="7" cy="14.1" rx="5" ry="2.4" fill="#2434A4"/><ellipse cx="6.6" cy="13.4" rx="4.8" ry="2.3" fill="url(#bs)"/></svg><span class="tx" style="left:81px">存货核算系统</span></div><div class="tr" style="top:271px"><i class="h" style="left:55px;width:6px"></i><i class="x p" style="left:45px"></i><svg class="a" style="left:60px;top:1px" width="13" height="17" viewBox="0 0 13 17"><path d="M10 0.6 L11.8 1.6 L11.6 10.4 L10.4 11.4Z" fill="#2434A4"/><path d="M1 1.6 L10 0.6 L10.5 11.2 L2.6 10.4Z" fill="url(#scr)" stroke="#3A5CCC" stroke-width=".8"/><path d="M5 11 L9 11.4 L9 12.5 L5 12.5Z" fill="#3848B0"/><ellipse cx="7" cy="14.1" rx="5" ry="2.4" fill="#2434A4"/><ellipse cx="6.6" cy="13.4" rx="4.8" ry="2.3" fill="url(#bs)"/></svg><span class="tx" style="left:81px">成本管理系统</span></div><div class="tr" style="top:289px"><i class="h" style="left:55px;width:6px"></i><i class="x p" style="left:45px"></i><svg class="a" style="left:60px;top:1px" width="13" height="17" viewBox="0 0 13 17"><path d="M10 0.6 L11.8 1.6 L11.6 10.4 L10.4 11.4Z" fill="#2434A4"/><path d="M1 1.6 L10 0.6 L10.5 11.2 L2.6 10.4Z" fill="url(#scr)" stroke="#3A5CCC" stroke-width=".8"/><path d="M5 11 L9 11.4 L9 12.5 L5 12.5Z" fill="#3848B0"/><ellipse cx="7" cy="14.1" rx="5" ry="2.4" fill="#2434A4"/><ellipse cx="6.6" cy="13.4" rx="4.8" ry="2.3" fill="url(#bs)"/></svg><span class="tx" style="left:81px">财务报表系统</span></div><div class="tr" style="top:307px"><i class="h" style="left:55px;width:6px"></i><i class="x p" style="left:45px"></i><svg class="a" style="left:60px;top:1px" width="13" height="17" viewBox="0 0 13 17"><path d="M10 0.6 L11.8 1.6 L11.6 10.4 L10.4 11.4Z" fill="#2434A4"/><path d="M1 1.6 L10 0.6 L10.5 11.2 L2.6 10.4Z" fill="url(#scr)" stroke="#3A5CCC" stroke-width=".8"/><path d="M5 11 L9 11.4 L9 12.5 L5 12.5Z" fill="#3848B0"/><ellipse cx="7" cy="14.1" rx="5" ry="2.4" fill="#2434A4"/><ellipse cx="6.6" cy="13.4" rx="4.8" ry="2.3" fill="url(#bs)"/></svg><span class="tx" style="left:81px">合并报表系统</span></div><div class="tr" style="top:325px"><i class="h" style="left:36px;width:5px"></i><i class="x " style="left:26px"></i><i class="a" style="left:49px;top:0;width:1px;height:18px;background:#fff"></i><svg class="a" style="left:41px;top:0px" width="17" height="18" viewBox="0 0 17 18"><circle cx="4.6" cy="5.6" r="4.4" fill="#1C50B8"/><path d="M1.5 3 Q4 0.5 7 2 Q6 5 8 8 Q5 8.5 3.5 6.5 Q3.5 4.5 1.5 3Z" fill="#48B838"/><path d="M2 2.6 Q4 1.2 6 1.8" stroke="#A0E880" stroke-width=".8" fill="none"/><g transform="translate(4.6,1)"><path d="M10 0.6 L11.8 1.6 L11.6 10.4 L10.4 11.4Z" fill="#2434A4"/><path d="M1 1.6 L10 0.6 L10.5 11.2 L2.6 10.4Z" fill="url(#scr)" stroke="#3A5CCC" stroke-width=".8"/><path d="M5 11 L9 11.4 L9 12.5 L5 12.5Z" fill="#3848B0"/><ellipse cx="7" cy="14.1" rx="5" ry="2.4" fill="#2434A4"/><ellipse cx="6.6" cy="13.4" rx="4.8" ry="2.3" fill="url(#bs)"/></g></svg><span class="tx" style="left:62px">人力资源平台</span></div><div class="tr" style="top:343px"><i class="h" style="left:55px;width:6px"></i><i class="x p" style="left:45px"></i><svg class="a" style="left:60px;top:1px" width="13" height="17" viewBox="0 0 13 17"><path d="M10 0.6 L11.8 1.6 L11.6 10.4 L10.4 11.4Z" fill="#2434A4"/><path d="M1 1.6 L10 0.6 L10.5 11.2 L2.6 10.4Z" fill="url(#scr)" stroke="#3A5CCC" stroke-width=".8"/><path d="M5 11 L9 11.4 L9 12.5 L5 12.5Z" fill="#3848B0"/><ellipse cx="7" cy="14.1" rx="5" ry="2.4" fill="#2434A4"/><ellipse cx="6.6" cy="13.4" rx="4.8" ry="2.3" fill="url(#bs)"/></svg><span class="tx" style="left:81px">人事管理系统</span></div><div class="tr" style="top:361px"><i class="h" style="left:55px;width:6px"></i><i class="x p" style="left:45px"></i><svg class="a" style="left:60px;top:1px" width="13" height="17" viewBox="0 0 13 17"><path d="M10 0.6 L11.8 1.6 L11.6 10.4 L10.4 11.4Z" fill="#2434A4"/><path d="M1 1.6 L10 0.6 L10.5 11.2 L2.6 10.4Z" fill="url(#scr)" stroke="#3A5CCC" stroke-width=".8"/><path d="M5 11 L9 11.4 L9 12.5 L5 12.5Z" fill="#3848B0"/><ellipse cx="7" cy="14.1" rx="5" ry="2.4" fill="#2434A4"/><ellipse cx="6.6" cy="13.4" rx="4.8" ry="2.3" fill="url(#bs)"/></svg><span class="tx" style="left:81px">考勤管理系统</span></div><div class="tr" style="top:379px"><i class="h" style="left:55px;width:6px"></i><i class="x p" style="left:45px"></i><svg class="a" style="left:60px;top:1px" width="13" height="17" viewBox="0 0 13 17"><path d="M10 0.6 L11.8 1.6 L11.6 10.4 L10.4 11.4Z" fill="#2434A4"/><path d="M1 1.6 L10 0.6 L10.5 11.2 L2.6 10.4Z" fill="url(#scr)" stroke="#3A5CCC" stroke-width=".8"/><path d="M5 11 L9 11.4 L9 12.5 L5 12.5Z" fill="#3848B0"/><ellipse cx="7" cy="14.1" rx="5" ry="2.4" fill="#2434A4"/><ellipse cx="6.6" cy="13.4" rx="4.8" ry="2.3" fill="url(#bs)"/></svg><span class="tx" style="left:81px">工资管理系统</span></div><div class="tr" style="top:397px"><i class="h" style="left:55px;width:6px"></i><i class="x p" style="left:45px"></i><svg class="a" style="left:60px;top:1px" width="13" height="17" viewBox="0 0 13 17"><path d="M10 0.6 L11.8 1.6 L11.6 10.4 L10.4 11.4Z" fill="#2434A4"/><path d="M1 1.6 L10 0.6 L10.5 11.2 L2.6 10.4Z" fill="url(#scr)" stroke="#3A5CCC" stroke-width=".8"/><path d="M5 11 L9 11.4 L9 12.5 L5 12.5Z" fill="#3848B0"/><ellipse cx="7" cy="14.1" rx="5" ry="2.4" fill="#2434A4"/><ellipse cx="6.6" cy="13.4" rx="4.8" ry="2.3" fill="url(#bs)"/></svg><span class="tx" style="left:81px">绩效管理系统</span></div><div class="tr" style="top:415px"><i class="h" style="left:55px;width:6px"></i><i class="x p" style="left:45px"></i><svg class="a" style="left:60px;top:1px" width="13" height="17" viewBox="0 0 13 17"><path d="M10 0.6 L11.8 1.6 L11.6 10.4 L10.4 11.4Z" fill="#2434A4"/><path d="M1 1.6 L10 0.6 L10.5 11.2 L2.6 10.4Z" fill="url(#scr)" stroke="#3A5CCC" stroke-width=".8"/><path d="M5 11 L9 11.4 L9 12.5 L5 12.5Z" fill="#3848B0"/><ellipse cx="7" cy="14.1" rx="5" ry="2.4" fill="#2434A4"/><ellipse cx="6.6" cy="13.4" rx="4.8" ry="2.3" fill="url(#bs)"/></svg><span class="tx" style="left:81px">培训管理系统</span></div><div class="tr" style="top:433px"><i class="h" style="left:55px;width:6px"></i><i class="x p" style="left:45px"></i><svg class="a" style="left:60px;top:1px" width="13" height="17" viewBox="0 0 13 17"><path d="M10 0.6 L11.8 1.6 L11.6 10.4 L10.4 11.4Z" fill="#2434A4"/><path d="M1 1.6 L10 0.6 L10.5 11.2 L2.6 10.4Z" fill="url(#scr)" stroke="#3A5CCC" stroke-width=".8"/><path d="M5 11 L9 11.4 L9 12.5 L5 12.5Z" fill="#3848B0"/><ellipse cx="7" cy="14.1" rx="5" ry="2.4" fill="#2434A4"/><ellipse cx="6.6" cy="13.4" rx="4.8" ry="2.3" fill="url(#bs)"/></svg><span class="tx" style="left:81px">后勤管理系统</span></div></div><div id="tsb" class="a"><i class="sbb" style="left:1px;top:1px"><svg class="a" style="left:0;top:0" width="13" height="13" viewBox="0 0 13 13"><path d="M3 9 L6.5 5.5 L10 9" fill="none" stroke="#4D6185" stroke-width="2"/></svg></i><i class="sbt" style="left:1px;top:127px;width:15px;height:197px"></i><i class="a" style="left:5px;top:221px;width:7px;height:8px;background:repeating-linear-gradient(#8FA6DC 0,#8FA6DC 1px,#EEF3FF 1px,#EEF3FF 2px)"></i><i class="sbb" style="left:1px;top:424px"><svg class="a" style="left:0;top:0" width="13" height="13" viewBox="0 0 13 13"><path d="M3 5 L6.5 8.5 L10 5" fill="none" stroke="#4D6185" stroke-width="2"/></svg></i></div><div id="lsp" class="a"><i class="a" style="left:108px;top:2px;width:36px;height:2px;background:repeating-linear-gradient(90deg,#E8F0FF 0,#E8F0FF 2px,transparent 2px,transparent 4px)"></i></div><div class="ob on" style="top:465px"><svg class="a" style="left:6px;top:7px" width="16" height="16" viewBox="0 0 16 16"><rect x="4.5" y="1" width="7" height="5.5" fill="#E03030" stroke="#B01818" stroke-width=".8"/><rect x="5.5" y="2.2" width="5" height="1" fill="#F8A0A0"/><path d="M8 6.5 V9 M3.5 11 V9 H12.5 V11" stroke="#2858C0" fill="none" stroke-width="1"/><rect x="0.8" y="10.5" width="6" height="4.5" fill="#58B0F0" stroke="#2870D0" stroke-width=".8"/><rect x="9.2" y="10.5" width="6" height="4.5" fill="#58B0F0" stroke="#2870D0" stroke-width=".8"/></svg><b>标准功能</b></div><i class="obl" style="top:494px"></i><div class="ob" style="top:495px"><svg class="a" style="left:6px;top:7px" width="16" height="16" viewBox="0 0 16 16"><rect x="1" y="1.5" width="14" height="13.5" rx="2" fill="#4CB848" stroke="#2C8C2C" stroke-width="1"/><rect x="2" y="2.5" width="12" height="4" rx="1" fill="#80D478"/><path d="M3.5 8 L6.5 11.5 L12.5 5 " fill="none" stroke="#FFF4D8" stroke-width="2.4"/></svg><b>用户功能</b></div><i class="obl" style="top:524px"></i><div class="ob" style="top:525px"><svg class="a" style="left:6px;top:7px" width="16" height="16" viewBox="0 0 16 16"><path d="M8 0.8 L10.2 5.6 L15.4 6.2 L11.5 9.7 L12.6 14.9 L8 12.2 L3.4 14.9 L4.5 9.7 L0.6 6.2 L5.8 5.6Z" fill="#F6B830" stroke="#C88010" stroke-width=".9"/><path d="M8 3 L9.4 6.4 L12.8 6.8 L8 8Z" fill="#FCE080"/><path d="M7 7 L8.6 5.8 V11 M7 11.2 H10" stroke="#2050C0" stroke-width="1.4" fill="none"/></svg><b>我的收藏</b></div><i class="obl" style="top:554px"></i><div class="ob" style="top:555px"><svg class="a" style="left:6px;top:7px" width="16" height="16" viewBox="0 0 16 16"><path d="M1 3.5 H5 V14.5 H1Z" fill="#BFE0FA" stroke="#3C86D8" stroke-width=".9"/><path d="M3.5 5 H13.5 V14.5 H3.5Z" fill="#5CB0F0" stroke="#2C78CC" stroke-width=".9"/><path d="M4 9 H13 V14 H4Z" fill="#2E8CE0"/><path d="M10 1 H13 V3.5 H15.5 V6.5 H13 V9 H10 V6.5 H7.5 V3.5 H10Z" fill="#F8B840" stroke="#C88010" stroke-width=".8"/></svg><b>我的报表</b></div><i class="obl" style="top:584px"></i><div class="ob" style="top:585px"><span class="a" style="left:238px;top:5px;font-size:12px;line-height:9px;font-weight:bold">»</span><i class="a" style="left:239px;top:17px;border:3px solid transparent;border-top:3px solid #000;border-bottom:0"></i></div><i class="obl" style="top:614px"></i><div class="btab" style="left:5px;width:73px;background:#fff;border:1px solid #8FA6D8;border-top:0;border-radius:0 0 4px 4px"><svg class="a" style="left:3px;top:2px" width="16" height="16" viewBox="0 0 16 16"><rect x="4.5" y="1" width="7" height="5.5" fill="#E03030" stroke="#B01818" stroke-width=".8"/><rect x="5.5" y="2.2" width="5" height="1" fill="#F8A0A0"/><path d="M8 6.5 V9 M3.5 11 V9 H12.5 V11" stroke="#2858C0" fill="none" stroke-width="1"/><rect x="0.8" y="10.5" width="6" height="4.5" fill="#58B0F0" stroke="#2870D0" stroke-width=".8"/><rect x="9.2" y="10.5" width="6" height="4.5" fill="#58B0F0" stroke="#2870D0" stroke-width=".8"/></svg><span class="a" style="left:21px;top:0">功能平台</span></div><div class="btab" style="left:78px;width:74px;background:linear-gradient(#C8DAF8,#9DBAEA);border:1px solid #7F9FD8;border-top:0;border-radius:0 0 4px 4px"><svg class="a" style="left:3px;top:2px" width="16" height="16" viewBox="0 0 16 16"><rect x="1" y="2" width="14" height="12.5" rx="1.5" fill="#F4F8FF" stroke="#3C7CD8"/><rect x="1.5" y="2.5" width="13" height="3" fill="#4C9CE8"/><rect x="3.5" y="7" width="4" height="2.6" fill="#3CA848"/><rect x="9" y="7" width="4" height="2.6" fill="#3C8CE0"/><rect x="3.5" y="10.6" width="4" height="2.6" fill="#E02828"/><rect x="9" y="10.6" width="4" height="2.6" fill="#F0A020"/></svg><span class="a" style="left:21px;top:0">工作平台</span></div></div>
<div id="spl" class="a"></div><div id="rpt" class="a"></div><div id="rp" class="a"><div id="tbar" class="a"><span class="tbn" style="left:-3px">新增</span><svg class="ico" style="left:12px" width="16" height="16" viewBox="0 0 16 16"><path d="M3.5 1.5 H10 L13 4.5 V14.5 H3.5Z" fill="#fff" stroke="#000" stroke-width="1.2"/><path d="M10 1.5 L13 4.5 H10Z" fill="#E020C0"/></svg><span class="tbn d" style="left:39px">修改</span><svg class="ico" style="left:54px" width="16" height="16" viewBox="0 0 16 16"><path d="M1 15 L2.5 10 L10 1.5 L15 5.5 L7.5 14Z" fill="#D0A890" stroke="#9C9C9C" stroke-width=".8"/><path d="M8.5 3.2 L10.5 1 L15.5 5 L13.5 7.2Z" fill="#F0D848" stroke="#B0A040" stroke-width=".6"/><path d="M4 9.5 L8.5 13 M5.5 8 L10 11.5 M7 6.2 L11.5 9.8" stroke="#C07878" stroke-width=".8"/><path d="M1 15 L2.2 11.5 L4.6 13.5Z" fill="#686868"/><path d="M6 15.5 H15" stroke="#A8B0C0" stroke-width="1"/></svg><span class="tbn d" style="left:81px">删除</span><svg class="ico" style="left:96px" width="16" height="16" viewBox="0 0 16 16"><path d="M5.5 1 L9.5 10 M10.5 1 L6.5 10" stroke="#7080A8" stroke-width="1.2" fill="none"/><circle cx="5.3" cy="12.2" r="2.2" fill="none" stroke="#5060C0" stroke-width="1.2"/><circle cx="10.7" cy="12.2" r="2.2" fill="none" stroke="#5060C0" stroke-width="1.2"/></svg><i class="tsep" style="left:127px"></i><span class="tbn" style="left:128px">预览</span><svg class="ico" style="left:143px" width="16" height="16" viewBox="0 0 16 16"><path d="M1 4 L4 1.5 H12 V4Z" fill="#fff"/><path d="M12 1.5 V9 L9.5 11 V4Z" fill="#909090"/><rect x="1" y="4" width="9" height="8" fill="#108878"/><circle cx="9.5" cy="9" r="3.8" fill="#E8F4F4" stroke="#000" stroke-width="1.1"/><path d="M7.5 8 H11.5 M7.5 10 H11.5 M8.5 6.5 V11.5 M10.5 6.5 V11.5" stroke="#40A8A0" stroke-width=".7"/><path d="M12.2 11.8 L15 14.6" stroke="#000" stroke-width="1.6"/></svg><span class="tbn" style="left:170px">打印</span><svg class="ico" style="left:185px" width="16" height="16" viewBox="0 0 16 16"><path d="M4.5 1 H12.5 L11 6 H3Z" fill="#fff" stroke="#000" stroke-width="1"/><path d="M5.5 2.8 H11 M5 4.3 H10.5" stroke="#000" stroke-width=".7"/><path d="M1.5 7.5 Q1.5 6 3 6 H13 Q14.5 6 14.5 7.5 V11 H1.5Z" fill="#fff" stroke="#000" stroke-width="1.1"/><path d="M2.5 11 H13.5 V13.8 H2.5Z" fill="#fff" stroke="#000" stroke-width="1"/><path d="M2 9 H14" stroke="#000" stroke-width=".8"/><rect x="10.5" y="7.2" width="2" height="1" fill="#E02080"/></svg><i class="tsep" style="left:216px"></i><span class="tbn" style="left:217px">刷新</span><svg class="ico" style="left:232px" width="16" height="16" viewBox="0 0 16 16"><path d="M9.5 5 L14 1 L15.5 2.5 L11.5 7Z" fill="#182880" stroke="#101860" stroke-width=".6"/><path d="M3 6 L7.5 3 L13 8.5 L10 12.5Z" fill="#F8F080" stroke="#404040" stroke-width=".9"/><path d="M5 7.5 L9 11 M6.5 5.5 L11 10" stroke="#C8B020" stroke-width=".8"/><path d="M1.5 7 L4 5.5 L10.5 12 L9 14Z" fill="#fff" stroke="#404040" stroke-width=".8"/></svg><i class="tsep" style="left:263px"></i><span class="tbn" style="left:264px">查询</span><svg class="ico" style="left:279px" width="16" height="16" viewBox="0 0 16 16"><path d="M2 6 L4 1.5 H6.5 V5 H9.5 V1.5 H12 L14 6 V14 H9.5 V8 H6.5 V14 H2Z" fill="#000"/><rect x="3.2" y="7" width="1.2" height="4" fill="#fff"/><rect x="10.8" y="7" width="1.2" height="4" fill="#fff"/><rect x="4.5" y="2.5" width="1" height="2" fill="#fff"/><rect x="10.5" y="2.5" width="1" height="2" fill="#fff"/></svg><i class="tsep" style="left:310px"></i><span class="tbn d" style="left:311px">审核</span><svg class="ico" style="left:326px" width="16" height="16" viewBox="0 0 16 16"><rect x="5.5" y="1.5" width="5" height="2.5" rx="1" fill="#D06060" stroke="#A04040" stroke-width=".6"/><path d="M6.5 4 H9.5 L10 8 H6Z" fill="#C85050"/><path d="M4 8 H12 L13 10.5 H3Z" fill="#D87060" stroke="#A05048" stroke-width=".6"/><path d="M2 11 L14 11 L15 14 H1Z" fill="#E8E8E8" stroke="#A0A0A0" stroke-width=".7"/></svg><span class="tbn" style="left:353px">冻结</span><svg class="ico" style="left:368px" width="16" height="16" viewBox="0 0 16 16"><path d="M4.5 7 V4.5 Q4.5 1.5 8 1.5 Q11.5 1.5 11.5 4.5 V7" fill="none" stroke="#000" stroke-width="1.6"/><path d="M5.8 7 V4.8 Q5.8 3 8 3 Q10.2 3 10.2 4.8 V7" fill="none" stroke="#fff" stroke-width=".8"/><rect x="2.5" y="7" width="11" height="8" fill="#F8E020" stroke="#000" stroke-width="1.2"/><path d="M4 13.8 L12 9.5 V13.8Z" fill="#807860"/><path d="M3.5 8.5 H12.5" stroke="#fff" stroke-width=".8"/></svg><span class="tbn d" style="left:395px">作废</span><svg class="ico" style="left:410px" width="16" height="16" viewBox="0 0 16 16"><path d="M3 4 L4.5 14.5 H11.5 L13 4Z" fill="#E4ECE8" stroke="#98A0A0" stroke-width=".9"/><ellipse cx="8" cy="4" rx="5.2" ry="1.8" fill="#F4F8F4" stroke="#98A0A0" stroke-width=".9"/><path d="M6 8 L8 6.5 L10 8 M10.5 9.5 L9.5 12 H7 M6 11.5 L5.5 9" fill="none" stroke="#48B058" stroke-width="1.2"/><path d="M5 1.5 L7 3 M9 0.8 L8.5 3 M11.5 1.8 L10 3.2" stroke="#B0B8B8" stroke-width=".8"/></svg><span class="tbn" style="left:437px">取消</span><svg class="ico" style="left:452px" width="16" height="16" viewBox="0 0 16 16"><path d="M4 8.5 Q5 4.5 9 4.5 Q13 4.5 13 8 Q13 10.5 11 11.5" fill="none" stroke="#2038B0" stroke-width="1.5"/><path d="M1.5 5.5 L6.5 6.5 L3 10.5Z" fill="#2038B0"/></svg><i class="tsep" style="left:483px"></i><span class="tbn" style="left:484px">凭证</span><svg class="ico" style="left:499px" width="16" height="16" viewBox="0 0 16 16"><rect x="1.5" y="1" width="13" height="14" fill="#fff" stroke="#000" stroke-width="1.1"/><path d="M8 1 V15" stroke="#000" stroke-width="1.6"/><path d="M3 3 H6.5 M9.5 3 H13 M3 5.5 H6.5 M9.5 5.5 H13" stroke="#E02020" stroke-width="1.2"/><path d="M3 8 H6.5 M9.5 8 H13 M3 10 H6.5 M9.5 10 H13" stroke="#404040" stroke-width=".8"/><path d="M3 12.5 H6.5 M9.5 12.5 H13" stroke="#20A040" stroke-width="1.1"/><rect x="7" y="1.5" width="2" height="2" fill="#20C0C0"/><rect x="7" y="12" width="2" height="2" fill="#E020E0"/></svg><i class="tsep" style="left:530px"></i><span class="tbn" style="left:531px">帮助</span><svg class="ico" style="left:546px" width="16" height="16" viewBox="0 0 16 16"><path d="M4 5.5 Q4 1.5 8 1.5 Q12 1.5 12 5 Q12 7 10 8.2 Q9.2 8.8 9.2 10.5 H6.6 Q6.6 7.8 8.2 6.8 Q9.2 6.2 9.2 5 Q9.2 4 8 4 Q6.8 4 6.8 5.5Z" fill="#F8E820" stroke="#000" stroke-width="1"/><rect x="6.6" y="12" width="2.8" height="2.8" fill="#F8E820" stroke="#000" stroke-width="1"/></svg><i class="tsep" style="left:577px"></i><span class="tbn" style="left:578px">关闭</span><svg class="ico" style="left:593px" width="16" height="16" viewBox="0 0 16 16"><path d="M3 1 H9 V13 H3Z" fill="#606060" stroke="#000" stroke-width="1"/><path d="M3.5 1.5 L7.5 3 V15 L3.5 13Z" fill="#20D8E8" stroke="#006878" stroke-width=".7"/><path d="M15 6.5 H11 M12.8 4.5 L10.8 6.5 L12.8 8.5" fill="none" stroke="#000" stroke-width="1.3"/></svg></div><div class="g" style="left:5px;top:50px;width:1007px;height:202px"><div class="gh" style="width:988px;height:33px"></div><div class="c" style="left:29px;top:3px;width:46px;text-align:center">状态</div><div class="c" style="left:76px;top:3px;width:109px;text-align:center">开票单号</div><div class="c" style="left:186px;top:3px;width:83px;text-align:center">客户编号</div><div class="c" style="left:270px;top:3px;width:151px;text-align:center">付款单位</div><div class="c" style="left:422px;top:3px;width:179px;text-align:center">客户名称</div><div class="c" style="left:602px;top:3px;width:56px;text-align:center">审核人</div><div class="c" style="left:659px;top:3px;width:107px;text-align:center">部门</div><div class="c" style="left:767px;top:3px;width:52px;text-align:center">发票类型</div><div class="c" style="left:820px;top:3px;width:107px;text-align:center">发票号</div><div class="c" style="left:928px;top:3px;width:70px;text-align:center">发票日期</div><div class="c m" style="left:0px;top:33px;width:28px;text-align:center;">1</div><div class="c" style="left:30px;top:33px;width:46px;">新单</div><div class="c m" style="left:77px;top:33px;width:109px;">IV05120008</div><div class="c m" style="left:187px;top:33px;width:83px;">002</div><div class="c" style="left:423px;top:33px;width:179px;">创新</div><div class="c" style="left:660px;top:33px;width:107px;">总经理</div><div class="c" style="left:768px;top:33px;width:52px;">蓝字增值税</div><div class="c m" style="left:929px;top:33px;width:59px;text-align:center;">2005-12-1</div><div class="sel" style="left:0;top:53px;width:988px;height:20px"></div><div class="a" style="left:77px;top:55px;width:109px;height:18px;background:#fff"></div><div class="a" style="left:76px;top:54px;width:72px;height:13px;background:#316AC5"></div><div class="c m w" style="left:0px;top:53px;width:28px;text-align:center;">2</div><div class="c w" style="left:30px;top:53px;width:46px;">审核</div><div class="c m w" style="left:77px;top:52px;width:109px;">IV05120007</div><div class="c m w" style="left:187px;top:53px;width:83px;">00H</div><div class="c w" style="left:271px;top:53px;width:151px;">汇科电脑</div><div class="c w" style="left:423px;top:53px;width:179px;">汇科电脑</div><div class="c w" style="left:603px;top:53px;width:56px;">超级用户</div><div class="c w" style="left:660px;top:53px;width:107px;">总经理</div><div class="c w" style="left:768px;top:53px;width:52px;">蓝字增值税</div><div class="c m w" style="left:821px;top:53px;width:107px;">ARI051200001</div><div class="c m w" style="left:929px;top:53px;width:59px;text-align:center;">2005-12-0</div><div class="c m" style="left:0px;top:73px;width:28px;text-align:center;">3</div><div class="c" style="left:30px;top:73px;width:46px;">审核</div><div class="c m" style="left:77px;top:73px;width:109px;">IV05120006</div><div class="c m" style="left:187px;top:73px;width:83px;">006</div><div class="c" style="left:271px;top:73px;width:151px;">热键科技</div><div class="c" style="left:423px;top:73px;width:179px;">热键科技</div><div class="c" style="left:603px;top:73px;width:56px;">超级用户</div><div class="c" style="left:660px;top:73px;width:107px;">总经理</div><div class="c" style="left:768px;top:73px;width:52px;">蓝字增值税</div><div class="c m" style="left:929px;top:73px;width:59px;text-align:center;">2005-12-0</div><div class="a" style="left:0;top:93px;width:988px;height:20px;background:#F7F7FF"></div><div class="c m" style="left:0px;top:93px;width:28px;text-align:center;">4</div><div class="c" style="left:30px;top:93px;width:46px;">审核</div><div class="c m" style="left:77px;top:93px;width:109px;">IV05120005</div><div class="c m" style="left:187px;top:93px;width:83px;">002</div><div class="c" style="left:271px;top:93px;width:151px;">创新</div><div class="c" style="left:423px;top:93px;width:179px;">创新</div><div class="c" style="left:603px;top:93px;width:56px;">超级用户</div><div class="c" style="left:660px;top:93px;width:107px;">总经理</div><div class="c" style="left:768px;top:93px;width:52px;">蓝字增值税</div><div class="c m" style="left:929px;top:93px;width:59px;text-align:center;">2005-12-0</div><div class="c m" style="left:0px;top:113px;width:28px;text-align:center;">5</div><div class="c" style="left:30px;top:113px;width:46px;">审核</div><div class="c m" style="left:77px;top:113px;width:109px;">IV05110004</div><div class="c m" style="left:187px;top:113px;width:83px;">004</div><div class="c m" style="left:271px;top:113px;width:151px;">UNIGLORY</div><div class="c m" style="left:423px;top:113px;width:179px;">UNIGLORY</div><div class="c" style="left:603px;top:113px;width:56px;">超级用户</div><div class="c" style="left:660px;top:113px;width:107px;">总经理</div><div class="c" style="left:768px;top:113px;width:52px;">蓝字增值税</div><div class="c m" style="left:929px;top:113px;width:59px;text-align:center;">2005-11-1</div><div class="a" style="left:0;top:133px;width:988px;height:20px;background:#F7F7FF"></div><div class="c m" style="left:0px;top:133px;width:28px;text-align:center;">6</div><div class="c" style="left:30px;top:133px;width:46px;">审核</div><div class="c m" style="left:77px;top:133px;width:109px;">IV05110003</div><div class="c m" style="left:187px;top:133px;width:83px;">002</div><div class="c" style="left:271px;top:133px;width:151px;">创新</div><div class="c" style="left:423px;top:133px;width:179px;">创新</div><div class="c" style="left:603px;top:133px;width:56px;">超级用户</div><div class="c" style="left:660px;top:133px;width:107px;">总经理</div><div class="c" style="left:768px;top:133px;width:52px;">蓝字增值税</div><div class="c m" style="left:929px;top:133px;width:59px;text-align:center;">2005-11-1</div><div class="c m" style="left:0px;top:153px;width:28px;text-align:center;">7</div><div class="c" style="left:30px;top:153px;width:46px;">审核</div><div class="c m" style="left:77px;top:153px;width:109px;">IV05110002</div><div class="c m" style="left:187px;top:153px;width:83px;">001</div><div class="c m" style="left:271px;top:153px;width:151px;">VIM</div><div class="c m" style="left:423px;top:153px;width:179px;">VIM</div><div class="c" style="left:603px;top:153px;width:56px;">超级用户</div><div class="c" style="left:660px;top:153px;width:107px;">总经理</div><div class="c" style="left:768px;top:153px;width:52px;">蓝字增值税</div><div class="c m" style="left:929px;top:153px;width:59px;text-align:center;">2005-11-1</div><i class="vln" style="left:28px;top:0;height:174px"></i><i class="vln" style="left:75px;top:0;height:174px"></i><i class="vln" style="left:185px;top:0;height:174px"></i><i class="vln" style="left:269px;top:0;height:174px"></i><i class="vln" style="left:421px;top:0;height:174px"></i><i class="vln" style="left:601px;top:0;height:174px"></i><i class="vln" style="left:658px;top:0;height:174px"></i><i class="vln" style="left:766px;top:0;height:174px"></i><i class="vln" style="left:819px;top:0;height:174px"></i><i class="vln" style="left:927px;top:0;height:174px"></i><i class="hln" style="left:0;top:53px;width:988px"></i><i class="hln" style="left:0;top:73px;width:988px"></i><i class="hln" style="left:0;top:93px;width:988px"></i><i class="hln" style="left:0;top:113px;width:988px"></i><i class="hln" style="left:0;top:133px;width:988px"></i><i class="hln" style="left:0;top:153px;width:988px"></i><i class="hln" style="left:0;top:173px;width:988px"></i><div class="vsb" style="left:987px;top:0;height:181px"><i class="sbb" style="left:1px;top:1px"><svg class="a" style="left:0;top:0" width="13" height="13" viewBox="0 0 13 13"><path d="M3 9 L6.5 5.5 L10 9" fill="none" stroke="#4D6185" stroke-width="2"/></svg></i><i class="sbt" style="left:1px;top:18px;width:15px;height:128px"></i><i class="a" style="left:5px;top:78px;width:7px;height:8px;background:repeating-linear-gradient(#8FA6DC 0,#8FA6DC 1px,#EEF3FF 1px,#EEF3FF 2px)"></i><i class="sbb" style="left:1px;top:164px"><svg class="a" style="left:0;top:0" width="13" height="13" viewBox="0 0 13 13"><path d="M3 5 L6.5 8.5 L10 5" fill="none" stroke="#4D6185" stroke-width="2"/></svg></i></div><div class="hsb" style="left:0;top:181px;width:988px"><i class="a" style="left:0;top:0;width:5px;height:17px;background:#6E6860"></i><i class="sbb" style="left:6px;top:1px"><svg class="a" style="left:0;top:0" width="13" height="13" viewBox="0 0 13 13"><path d="M8.5 3 L5 6.5 L8.5 10" fill="none" stroke="#4D6185" stroke-width="2"/></svg></i><i class="sbt" style="left:22px;top:1px;width:313px;height:15px"></i><i class="a" style="left:174px;top:5px;width:8px;height:7px;background:repeating-linear-gradient(90deg,#8FA6DC 0,#8FA6DC 1px,#EEF3FF 1px,#EEF3FF 2px)"></i><i class="sbb" style="left:970px;top:1px"><svg class="a" style="left:0;top:0" width="13" height="13" viewBox="0 0 13 13"><path d="M5 3 L8.5 6.5 L5 10" fill="none" stroke="#4D6185" stroke-width="2"/></svg></i></div><i class="a" style="left:987px;top:181px;width:18px;height:17px;background:#E4E0CE"></i></div><div id="pg" class="a"></div><div id="tb1" class="a">发票分录</div><div class="g" style="left:15px;top:290px;width:992px;height:304px"><div class="gh" style="width:988px;height:30px"></div><div class="c" style="left:32px;top:3px;width:89px;text-align:center">产品编号</div><div class="c" style="left:122px;top:3px;width:143px;text-align:center">产品名称</div><div class="c" style="left:266px;top:3px;width:123px;text-align:center">规格</div><div class="c" style="left:390px;top:1px;width:28px;height:28px;line-height:11px;text-align:center;padding-top:2px">基准<br>单位</div><div class="c" style="left:419px;top:3px;width:57px;text-align:center">单位</div><div class="c" style="left:477px;top:3px;width:42px;text-align:center">换算率</div><div class="c" style="left:520px;top:3px;width:67px;text-align:center">数量</div><div class="c" style="left:588px;top:3px;width:60px;text-align:center">单价</div><div class="c" style="left:649px;top:3px;width:74px;text-align:center">含税单价</div><div class="c" style="left:724px;top:3px;width:48px;text-align:center">折扣(%)</div><div class="c" style="left:773px;top:3px;width:91px;text-align:center">含税总额(原币)</div><div class="c" style="left:865px;top:3px;width:50px;text-align:center">税率(%)</div><div class="c" style="left:916px;top:1px;width:77px;height:28px;line-height:11px;text-align:center;padding-top:2px">未含税金额(本<br>位币)</div><div class="sel" style="left:0;top:30px;width:988px;height:20px"></div><div class="c m w" style="left:0px;top:30px;width:31px;text-align:center;">1</div><div class="c m w" style="left:33px;top:30px;width:88px;">02014306H0100</div><div class="c m w" style="left:123px;top:30px;width:142px;">申达 K140 PS2 DIALOG</div><div class="c w" style="left:267px;top:30px;width:122px;">珠光蓝+亮银多媒体+黑</div><div class="c w" style="left:391px;top:30px;width:27px;">套</div><div class="c w" style="left:420px;top:30px;width:56px;">套</div><div class="c m w" style="left:478px;top:30px;width:41px;text-align:right;padding-right:2px;">1.</div><div class="c m w" style="left:521px;top:30px;width:66px;text-align:right;padding-right:2px;">1,000.</div><div class="c m w" style="left:589px;top:30px;width:59px;text-align:right;padding-right:2px;">20.</div><div class="c m w" style="left:650px;top:30px;width:73px;text-align:right;padding-right:2px;">20.</div><div class="c m w" style="left:725px;top:30px;width:47px;text-align:right;padding-right:2px;">0.</div><div class="c m w" style="left:774px;top:30px;width:90px;text-align:right;padding-right:2px;">20,000.</div><div class="c m w" style="left:866px;top:30px;width:49px;text-align:right;padding-right:2px;">0.</div><div class="c m w" style="left:917px;top:30px;width:70px;text-align:right;padding-right:2px;width:84px;">20,000.</div><div class="a" style="left:0;top:50px;width:988px;height:20px;background:#F7F7FF"></div><div class="c m" style="left:0px;top:50px;width:31px;text-align:center;">2</div><div class="c m" style="left:33px;top:50px;width:88px;color:#808080;">0102R31080000</div><div class="c m" style="left:123px;top:50px;width:142px;">Navicom M38 EL TRIN logo</div><div class="c" style="left:267px;top:50px;width:122px;">透明滚轮套+透明蓝按键</div><div class="c" style="left:391px;top:50px;width:27px;">个</div><div class="c" style="left:420px;top:50px;width:56px;">个</div><div class="c m" style="left:478px;top:50px;width:41px;text-align:right;padding-right:2px;">1.</div><div class="c m" style="left:521px;top:50px;width:66px;text-align:right;padding-right:2px;">1,000.</div><div class="c m" style="left:589px;top:50px;width:59px;text-align:right;padding-right:2px;">10.</div><div class="c m" style="left:650px;top:50px;width:73px;text-align:right;padding-right:2px;">10.</div><div class="c m" style="left:725px;top:50px;width:47px;text-align:right;padding-right:2px;">0.</div><div class="c m" style="left:774px;top:50px;width:90px;text-align:right;padding-right:2px;">10,000.</div><div class="c m" style="left:866px;top:50px;width:49px;text-align:right;padding-right:2px;">0.</div><div class="c m" style="left:917px;top:50px;width:70px;text-align:right;padding-right:2px;width:84px;">10,000.</div><i class="vln" style="left:31px;top:0;height:70px"></i><i class="vln" style="left:121px;top:0;height:70px"></i><i class="vln" style="left:265px;top:0;height:70px"></i><i class="vln" style="left:389px;top:0;height:70px"></i><i class="vln" style="left:418px;top:0;height:70px"></i><i class="vln" style="left:476px;top:0;height:70px"></i><i class="vln" style="left:519px;top:0;height:70px"></i><i class="vln" style="left:587px;top:0;height:70px"></i><i class="vln" style="left:648px;top:0;height:70px"></i><i class="vln" style="left:723px;top:0;height:70px"></i><i class="vln" style="left:772px;top:0;height:70px"></i><i class="vln" style="left:864px;top:0;height:70px"></i><i class="vln" style="left:915px;top:0;height:70px"></i><i class="hln" style="left:0;top:50px;width:988px"></i><i class="hln" style="left:0;top:70px;width:988px"></i><div class="a" style="left:0;top:259px;width:988px;height:24px;background:#CCD5F8"></div><div class="c" style="left:32px;top:261px;width:89px;text-align:center">合计</div><div class="c m" style="left:520px;top:261px;width:67px;color:#808080;text-align:right;padding-right:2px;">2,000.</div><div class="c m" style="left:773px;top:261px;width:91px;color:#808080;text-align:right;padding-right:2px;">30,000.</div><div class="c m" style="left:916px;top:261px;width:71px;color:#808080;text-align:right;padding-right:2px;width:84px;">30,000.</div><div class="hsb" style="left:0;top:283px;width:988px"><i class="a" style="left:0;top:0;width:5px;height:17px;background:#6E6860"></i><i class="sbb" style="left:6px;top:1px"><svg class="a" style="left:0;top:0" width="13" height="13" viewBox="0 0 13 13"><path d="M8.5 3 L5 6.5 L8.5 10" fill="none" stroke="#4D6185" stroke-width="2"/></svg></i><i class="sbt" style="left:22px;top:1px;width:472px;height:15px"></i><i class="a" style="left:254px;top:5px;width:8px;height:7px;background:repeating-linear-gradient(90deg,#8FA6DC 0,#8FA6DC 1px,#EEF3FF 1px,#EEF3FF 2px)"></i><i class="sbb" style="left:971px;top:1px"><svg class="a" style="left:0;top:0" width="13" height="13" viewBox="0 0 13 13"><path d="M5 3 L8.5 6.5 L5 10" fill="none" stroke="#4D6185" stroke-width="2"/></svg></i></div></div><div id="qb" class="a">查询条件: (公司范围: 深圳市拓步软件技术有限公司)<i class="qs" style="top:2px"><svg class="a" style="left:2px;top:1px" width="9" height="8" viewBox="0 0 9 8"><path d="M1.5 6 L4.5 3 L7.5 6" fill="none" stroke="#C8C6B8" stroke-width="1.8"/></svg></i><i class="qs" style="top:15px"><svg class="a" style="left:2px;top:1px" width="9" height="8" viewBox="0 0 9 8"><path d="M1.5 2.5 L4.5 5.5 L7.5 2.5" fill="none" stroke="#C8C6B8" stroke-width="1.8"/></svg></i></div></div>
<div id="sb" class="a"><div class="sp" style="left:0;top:2px;width:508px;height:16px;border-left:0;padding-left:3px;line-height:15px">本次操作费时 3秒</div><div class="sp r" style="left:511px;width:139px;padding-left:23px"><svg class="a" style="left:3px;top:-1px" width="18" height="16" viewBox="0 0 18 16"><path d="M1 6 L9 1 L17 6 V14.5 H1Z" fill="#D8ECFC" stroke="#3888D8" stroke-width="1"/><ellipse cx="9" cy="6.5" rx="5.5" ry="3" fill="#F8E0A0" stroke="#D0A850" stroke-width=".6"/><path d="M1 7 L9 11.5 L17 7 M1 14.5 L7 10.5 M17 14.5 L11 10.5" fill="none" stroke="#3888D8" stroke-width="1"/></svg>你有 27 份新邮件!</div><div class="sp r" style="left:653px;width:142px;padding-left:26px"><svg class="a" style="left:6px;top:-2px" width="16" height="16" viewBox="0 0 16 16"><path d="M1 3.5 H5 V14.5 H1Z" fill="#BFE0FA" stroke="#3C86D8" stroke-width=".9"/><path d="M3.5 5 H13.5 V14.5 H3.5Z" fill="#5CB0F0" stroke="#2C78CC" stroke-width=".9"/><path d="M4 9 H13 V14 H4Z" fill="#2E8CE0"/><path d="M10 1 H13 V3.5 H15.5 V6.5 H13 V9 H10 V6.5 H7.5 V3.5 H10Z" fill="#F8B840" stroke="#C88010" stroke-width=".8"/></svg>你有 0 件审核事务!</div><div class="sp" style="left:801px;width:179px;padding-left:3px;top:3px;height:18px;line-height:20px">[MLK]深圳市拓步软件技术有限公司</div><div class="sp" style="left:984px;width:79px;padding-left:3px;top:3px;height:18px;line-height:20px">期间:2005.10</div><div class="sp" style="left:1067px;width:80px;padding-left:3px;top:3px;height:18px;line-height:20px">用户:超级用户</div><div class="sp" style="left:1153px;width:123px;padding-left:5px;top:3px;height:18px;line-height:20px">2012-05-03 09:43:21</div></div><div id="task" class="a"><i class="a" style="left:0;top:0;width:92px;height:2px;background:#3C9A3C"></i></div>
</body></html>
